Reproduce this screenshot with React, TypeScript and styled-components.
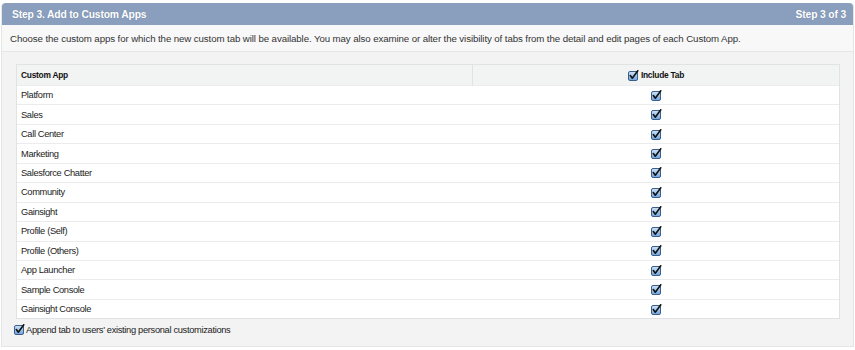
import React from "react";
import styled, { createGlobalStyle } from "styled-components";

const Global = createGlobalStyle`
  html, body { margin: 0; padding: 0; background: #ffffff; }
  body { font-family: "Liberation Sans", Arial, sans-serif; color: #222; }
`;

const Panel = styled.div`
  margin: 3px 0 0 1px;
  width: 851px;
  border: 1px solid #e3e5e7;
  border-top: none;
  border-radius: 4px 4px 0 0;
  background: #f3f3f3;
`;

const Header = styled.div`
  height: 22px;
  background: #8a9ebe;
  border-radius: 4px 4px 0 0;
  display: flex;
  align-items: center;
  justify-content: space-between;
  padding: 0 7px 0 10px;
  color: #fff;
  font-weight: bold;
  font-size: 10.3px;
  letter-spacing: -0.15px;
  text-shadow: 0 0 1px rgba(60, 80, 110, 0.4);
`;

const Description = styled.div`
  height: 26px;
  background: #f8f8f8;
  border-bottom: 1px solid #e6e6e6;
  display: flex;
  align-items: center;
  padding-left: 8px;
  font-size: 9.7px;
  letter-spacing: -0.1px;
  color: #333;
  white-space: nowrap;
`;

const Body = styled.div`
  padding: 12px 13px 0 14px;
  height: 294px;
  box-sizing: border-box;
`;

const Table = styled.div`
  background: #fff;
  border: 1px solid #e0e2e4;
`;

const Row = styled.div<{ $head?: boolean }>`
  display: grid;
  grid-template-columns: 456px 1fr;
  height: ${(p) => (p.$head ? "20px" : "19.45px")};
  background: ${(p) => (p.$head ? "#f2f3f3" : "#fff")};
  border-top: ${(p) => (p.$head ? "none" : "1px solid #ececec")};
  box-sizing: border-box;
  font-size: ${(p) => (p.$head ? "8.4px" : "9.3px")};
  letter-spacing: ${(p) => (p.$head ? "-0.25px" : "-0.35px")};
  font-weight: ${(p) => (p.$head ? "bold" : "normal")};
  color: ${(p) => (p.$head ? "#111" : "#222")};
`;

const NameCell = styled.div<{ $head?: boolean }>`
  display: flex;
  align-items: center;
  padding-left: 4px;
  border-right: ${(p) => (p.$head ? "1px solid #e0e2e4" : "none")};
`;

const CheckCell = styled.div`
  display: flex;
  align-items: center;
  justify-content: center;
  gap: 2px;
`;

const Footer = styled.div`
  display: flex;
  align-items: center;
  gap: 1px;
  margin-top: 5px;
  margin-left: -2px;
  font-size: 9.3px;
  letter-spacing: -0.32px;
  color: #222;
`;

const Box = styled.svg`
  display: block;
  flex: none;
`;

const Check = () => (
  <Box width="11" height="11" viewBox="0 0 11 11">
    <defs>
      <linearGradient id="cbg" x1="0" y1="0" x2="0" y2="1">
        <stop offset="0" stopColor="#cfe3f7" />
        <stop offset="1" stopColor="#6fa3dc" />
      </linearGradient>
    </defs>
    <rect x="0.5" y="1.5" width="9" height="9" rx="1.5" fill="url(#cbg)" stroke="#3b5f8c" />
    <path d="M2.3 5.6 L4.3 8.2 L9.8 0.8" fill="none" stroke="#111" strokeWidth="1.6" strokeLinecap="round" strokeLinejoin="round" />
  </Box>
);

const apps = [
  "Platform",
  "Sales",
  "Call Center",
  "Marketing",
  "Salesforce Chatter",
  "Community",
  "Gainsight",
  "Profile (Self)",
  "Profile (Others)",
  "App Launcher",
  "Sample Console",
  "Gainsight Console",
];

export default function App() {
  return (
    <>
      <Global />
      <Panel>
        <Header>
          <span>Step 3. Add to Custom Apps</span>
          <span>Step 3 of 3</span>
        </Header>
        <Description>
          Choose the custom apps for which the new custom tab will be available. You may also examine or alter the
          visibility of tabs from the detail and edit pages of each Custom App.
        </Description>
        <Body>
          <Table>
            <Row $head>
              <NameCell $head>Custom App</NameCell>
              <CheckCell>
                <Check />
                <span>Include Tab</span>
              </CheckCell>
            </Row>
            {apps.map((a) => (
              <Row key={a}>
                <NameCell>{a}</NameCell>
                <CheckCell>
                  <Check />
                </CheckCell>
              </Row>
            ))}
          </Table>
          <Footer>
            <Check />
            <span>Append tab to users' existing personal customizations</span>
          </Footer>
        </Body>
      </Panel>
    </>
  );
}
